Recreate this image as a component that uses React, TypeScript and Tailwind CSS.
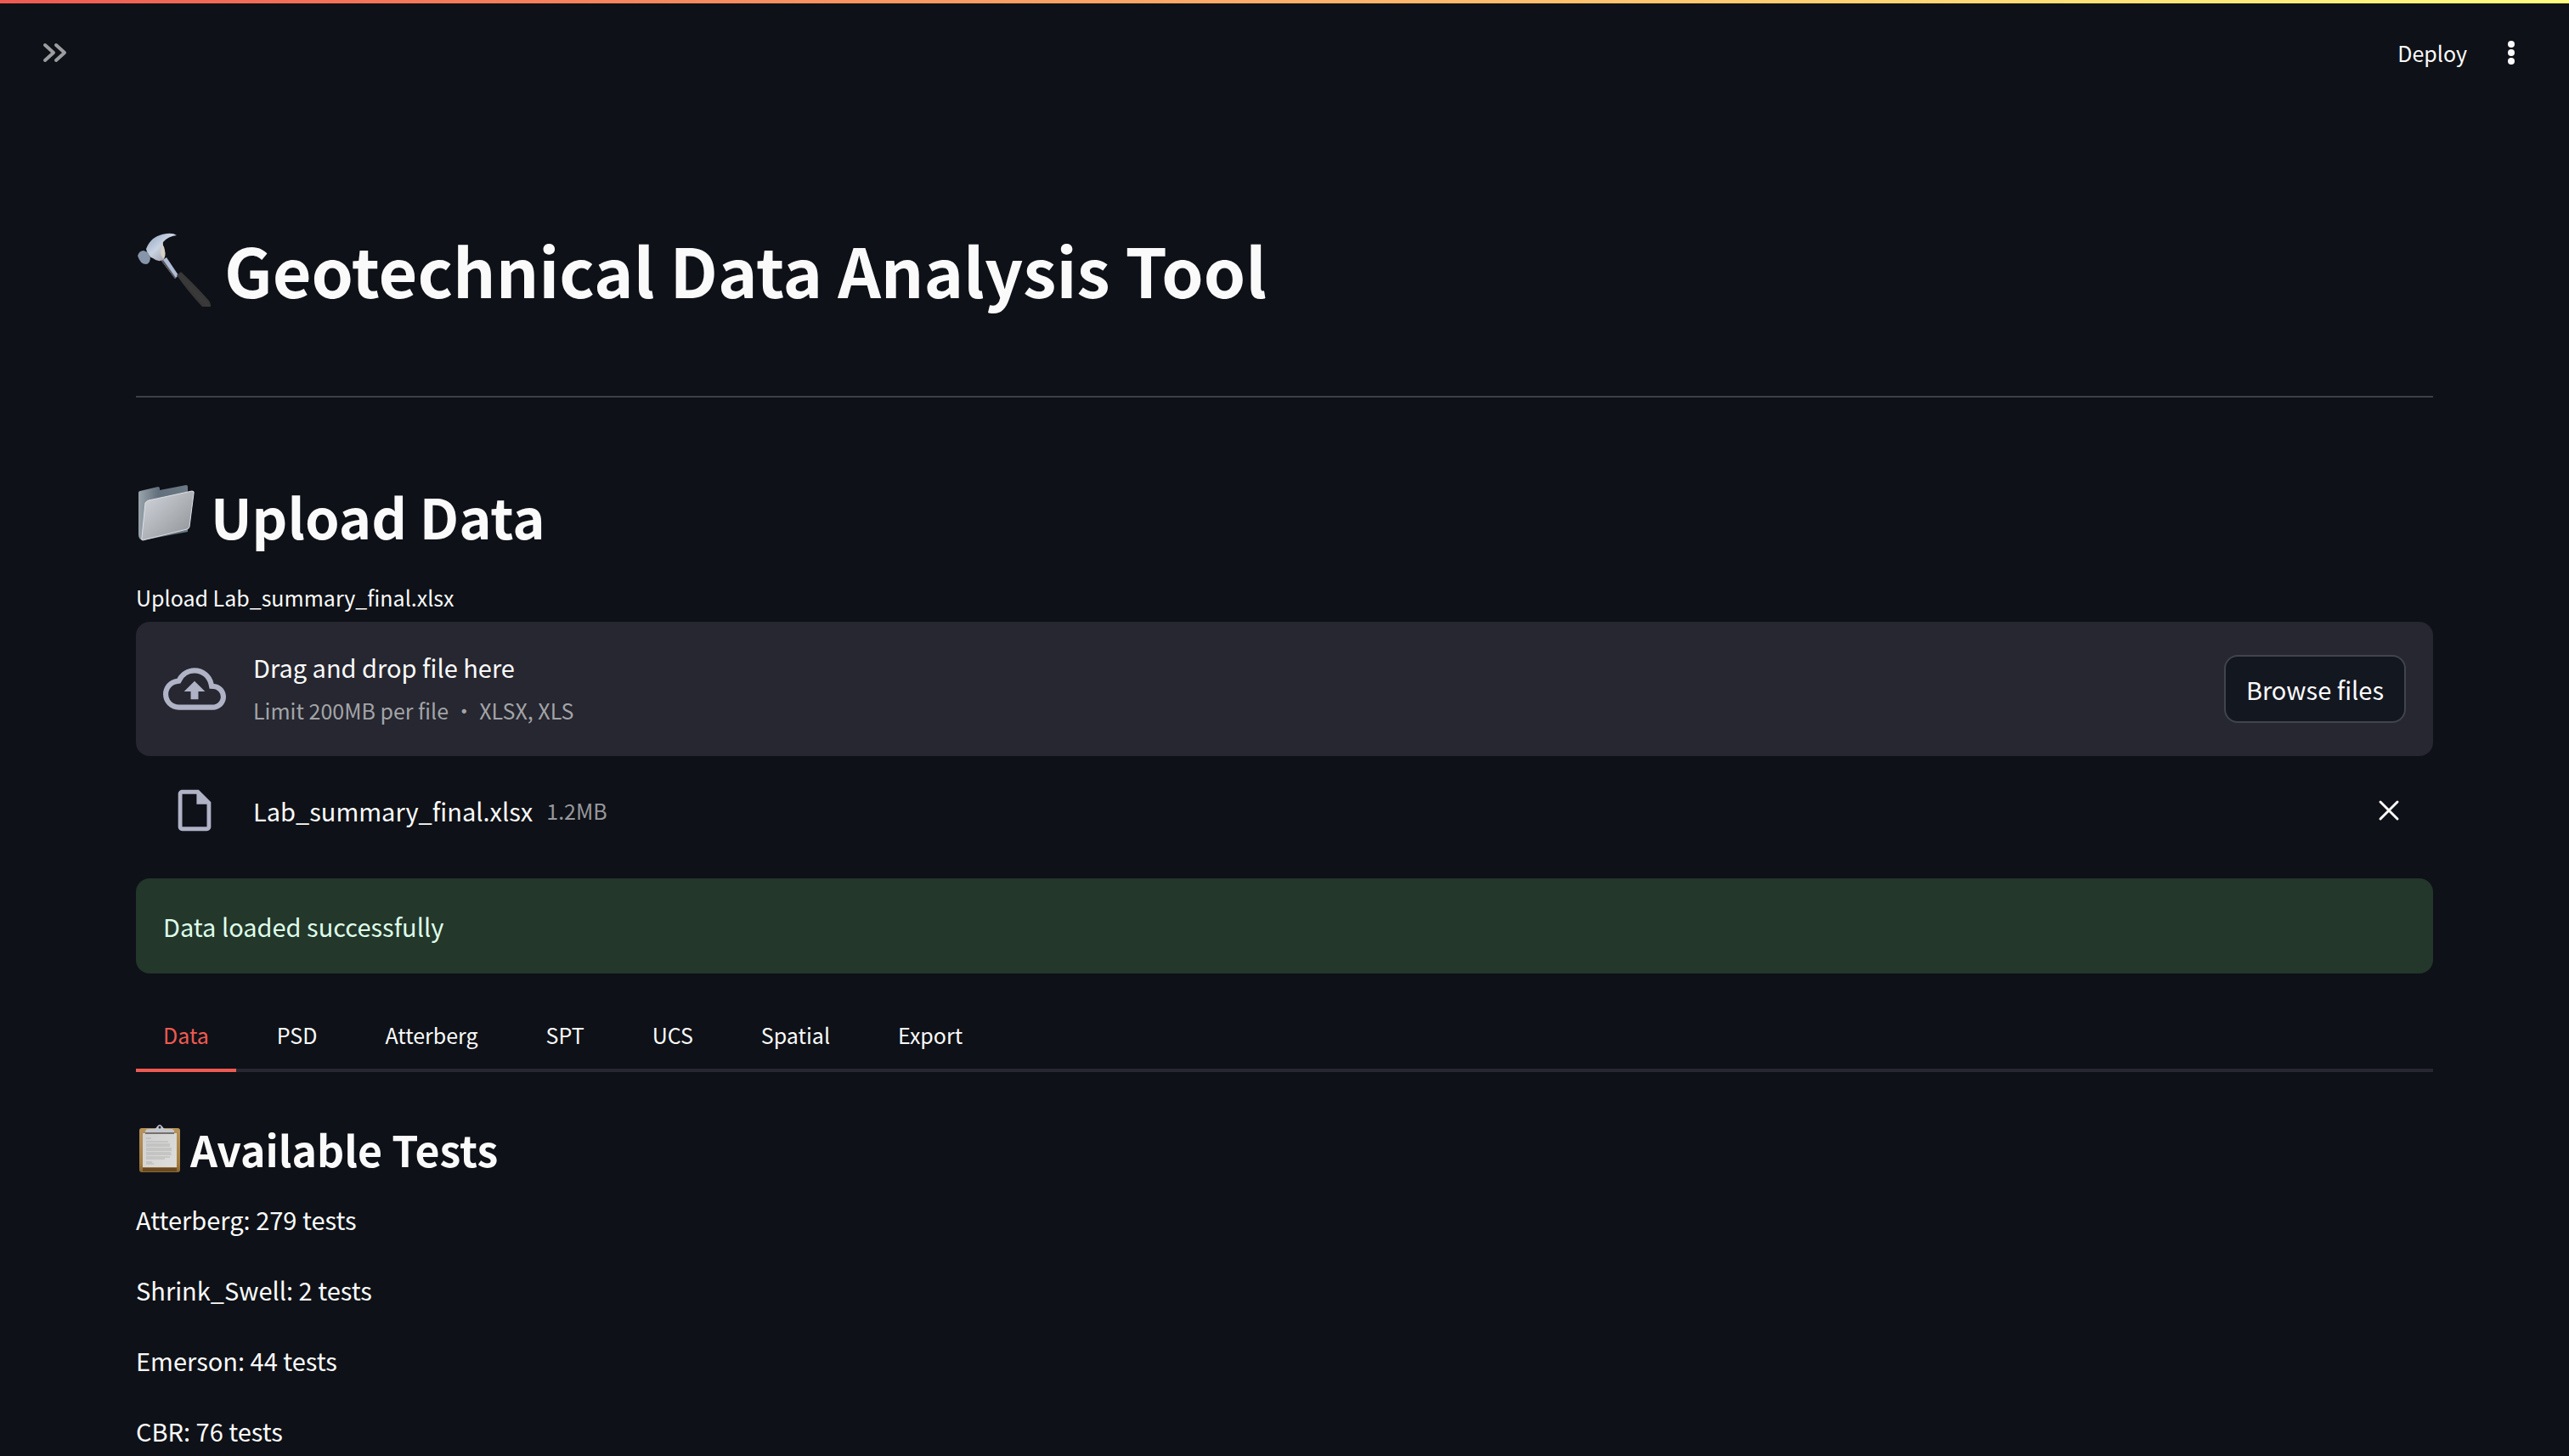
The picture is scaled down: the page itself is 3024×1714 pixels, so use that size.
import React from "react";

const tabs = ["Data", "PSD", "Atterberg", "SPT", "UCS", "Spatial", "Export"];

const tests = [
  { name: "Atterberg", count: 279 },
  { name: "Shrink_Swell", count: 2 },
  { name: "Emerson", count: 44 },
  { name: "CBR", count: 76 },
];

function HammerIcon() {
  return (
    <svg viewBox="0 0 88 88" className="h-[88px] w-[88px] shrink-0" aria-hidden="true">
      <defs>
        <linearGradient id="hammer-head" x1="0" y1="0" x2="1" y2="1">
          <stop offset="0" stopColor="#8fa3bd" />
          <stop offset="0.45" stopColor="#c9d3e2" />
          <stop offset="1" stopColor="#8d8a92" />
        </linearGradient>
        <linearGradient id="hammer-grip" x1="0" y1="1" x2="1" y2="0">
          <stop offset="0" stopColor="#1b1b1b" />
          <stop offset="0.5" stopColor="#3a3a3a" />
          <stop offset="1" stopColor="#222222" />
        </linearGradient>
      </defs>
      <path d="M30 34 L36 30 L50 51 L46 55 Z" fill="#aebdd3" />
      <path d="M30 34 L32 33 L47 54 L46 55 Z" fill="#5b5558" />
      <path d="M46 54 L51 50 Q70 68 84 84 Q88 90 84 94 Q80 96 76 91 Q60 74 46 54 Z" transform="translate(2 -3)" fill="url(#hammer-grip)" />
      <path d="M12 20 Q18 4 36 2 Q44 1 48 4 Q38 5 32 12 Q31 16 34 22 Q36 28 32 33 Q26 36 20 31 Q14 29 12 20 Z" fill="url(#hammer-head)" />
      <path d="M31 14 Q36 21 33 32 Q30 30 29 24 Z" fill="#d8cfc4" />
      <path d="M2 28 Q4 22 9 22 Q16 24 17 31 Q16 38 12 38 Q5 38 2 28 Z" fill="#8795aa" />
    </svg>
  );
}

function FolderIcon() {
  return (
    <svg viewBox="0 0 72 72" className="h-[72px] w-[72px] shrink-0" aria-hidden="true">
      <defs>
        <linearGradient id="folder-front" x1="0" y1="0" x2="1" y2="1">
          <stop offset="0" stopColor="#d3d7de" />
          <stop offset="0.5" stopColor="#b0b3b8" />
          <stop offset="1" stopColor="#8d9193" />
        </linearGradient>
        <linearGradient id="folder-back" x1="0" y1="0" x2="1" y2="0">
          <stop offset="0" stopColor="#9aa4ab" />
          <stop offset="0.4" stopColor="#62707d" />
          <stop offset="1" stopColor="#6b7884" />
        </linearGradient>
      </defs>
      <path d="M3 9 Q3 7 5 7 L26 2 Q28 2 28 4 L28 6 L59 0 Q61 0 61 2 L61 55 L8 65 Q3 64 3 58 Z" fill="url(#folder-back)" />
      <path d="M15 18 L66 7 Q69 7 68 10 L63 49 Q63 51 60 52 L8 65 Q6 65 7 62 L11 21 Q12 19 15 18 Z" fill="url(#folder-front)" stroke="#dde1e6" strokeWidth="1" />
    </svg>
  );
}

function ClipboardIcon() {
  return (
    <svg viewBox="0 0 56 56" className="h-14 w-14 shrink-0" aria-hidden="true">
      <defs>
        <linearGradient id="clip-board" x1="0" y1="0" x2="0" y2="1">
          <stop offset="0" stopColor="#b8935a" />
          <stop offset="0.8" stopColor="#a47c3f" />
          <stop offset="1" stopColor="#8a6633" />
        </linearGradient>
        <linearGradient id="clip-paper" x1="0" y1="0" x2="1" y2="1">
          <stop offset="0" stopColor="#cfcfcf" />
          <stop offset="1" stopColor="#dededc" />
        </linearGradient>
      </defs>
      <rect x="4" y="4" width="48" height="52" rx="3" fill="url(#clip-board)" />
      <rect x="8" y="51" width="40" height="4" fill="#6b4a22" />
      <rect x="8" y="10" width="40" height="40" fill="url(#clip-paper)" />
      <g stroke="#b2b2b2" strokeWidth="1">
        <path d="M12 16h6M12 20h26M12 23h28M12 25h28M12 28h30M12 30h30M12 33h29M12 35h30M12 38h28M12 40h22M12 44h7M12 46h9" />
      </g>
      <path d="M11 10 V8 Q11 5 15 5 H22 Q24 4 25 2 Q28 -2 31 2 Q32 4 34 5 H41 Q45 5 45 8 V10 Z" fill="#c3c8ce" />
      <rect x="11" y="9" width="34" height="2" fill="#77706d" />
      <circle cx="28" cy="3" r="1.5" fill="#22252b" />
    </svg>
  );
}

function CloudUploadIcon() {
  return (
    <svg viewBox="0 0 24 24" className="h-[74px] w-[74px] shrink-0" fill="currentColor" aria-hidden="true">
      <path d="M19.35 10.04A7.49 7.49 0 0012 4C9.11 4 6.6 5.64 5.35 8.04A5.994 5.994 0 000 14c0 3.31 2.69 6 6 6h13c2.76 0 5-2.24 5-5 0-2.64-2.05-4.78-4.65-4.96zM19 18H6c-2.21 0-4-1.79-4-4 0-2.05 1.53-3.76 3.56-3.97l1.07-.11.5-.95A5.469 5.469 0 0112 6c2.62 0 4.88 1.86 5.39 4.43l.3 1.5 1.53.11A2.98 2.98 0 0122 15c0 1.65-1.35 3-3 3zM8 13h2.55v3h2.9v-3H16l-4-4z" />
    </svg>
  );
}

function FileIcon() {
  return (
    <svg viewBox="0 0 24 24" className="h-[58px] w-[58px] shrink-0" fill="currentColor" aria-hidden="true">
      <path d="M14 2H6c-1.1 0-1.99.9-1.99 2L4 20c0 1.1.89 2 1.99 2H18c1.1 0 2-.9 2-2V8l-6-6zM6 20V4h7v5h5v11H6z" />
    </svg>
  );
}

export default function App() {
  const [active, setActive] = React.useState("Data");
  return (
    <div className="flex h-screen flex-col overflow-hidden bg-[#0e1117] font-['Noto_Sans_CJK_SC',sans-serif] text-[29px] leading-[51px] text-[#fafafa]">
      <div className="h-1 shrink-0 bg-linear-to-r from-[#ee5a52] to-[#fffd80]" />
      <header className="flex h-[116px] shrink-0 items-center justify-between pr-12 pl-10">
        <button type="button" aria-label="Open sidebar" className="flex h-12 w-12 items-center justify-center text-[#9c9da0]">
          <svg viewBox="0 0 48 48" className="h-12 w-12" fill="none" stroke="currentColor" strokeWidth="4" strokeLinecap="round" strokeLinejoin="round">
            <path d="M13 15l10 9-10 9M26 15l10 9-10 9" />
          </svg>
        </button>
        <div className="flex items-center gap-8">
          <button type="button" className="text-[25px]">Deploy</button>
          <button type="button" aria-label="Main menu" className="flex h-10 w-10 items-center justify-center">
            <svg viewBox="0 0 40 40" className="h-10 w-10" fill="currentColor">
              <circle cx="20" cy="10" r="4" />
              <circle cx="20" cy="20" r="4" />
              <circle cx="20" cy="30" r="4" />
            </svg>
          </button>
        </div>
      </header>

      <main className="flex flex-col px-40 pt-36">
        <h1 className="flex items-center gap-4 text-[79px] leading-[106px] font-bold">
          <HammerIcon />
          Geotechnical Data Analysis Tool
        </h1>
        <hr className="mt-24 border-t-2 border-[#3d4044]" />

        <h2 className="mt-24 flex items-center gap-4 text-[65px] leading-[86px] font-bold">
          <FolderIcon />
          Upload Data
        </h2>
        <label htmlFor="file" className="mt-8 text-[25px] leading-[42px]">Upload Lab_summary_final.xlsx</label>
        <section className="mt-2 flex h-[158px] items-center gap-8 rounded-2xl bg-[#262730] px-8">
          <span className="text-[#b0b3c6]"><CloudUploadIcon /></span>
          <div className="flex grow flex-col">
            <span>Drag and drop file here</span>
            <small className="text-[25px] text-[#a3a4a8]">Limit 200MB per file • XLSX, XLS</small>
          </div>
          <input id="file" type="file" accept=".xlsx,.xls" className="hidden" />
          <button type="button" className="h-20 rounded-2xl border-2 border-[#41444c] bg-[#131720] px-6">Browse files</button>
        </section>

        <div className="mt-8 flex h-16 items-center pr-8 pl-10">
          <span className="mr-10 text-[#b0b3c6]"><FileIcon /></span>
          <span>Lab_summary_final.xlsx</span>
          <small className="ml-4 text-[25px] text-[#97989c]">1.2MB</small>
          <button type="button" aria-label="Remove file" className="ml-auto flex h-10 w-10 items-center justify-center">
            <svg viewBox="0 0 40 40" className="h-10 w-10" stroke="currentColor" strokeWidth="3" strokeLinecap="round">
              <path d="M10 10l20 20M30 10l-20 20" />
            </svg>
          </button>
        </div>

        <div role="alert" className="mt-12 flex h-28 items-center rounded-2xl bg-[#23372b] px-8 text-[#dffde9]">
          Data loaded successfully
        </div>

        <div role="tablist" className="mt-8 flex gap-4 border-b-4 border-[#262730]">
          {tabs.map((tab) => (
            <button
              key={tab}
              type="button"
              role="tab"
              aria-selected={tab === active}
              onClick={() => setActive(tab)}
              className={
                tab === active
                  ? "-mb-1 h-[84px] border-b-4 border-[#ee5a52] px-8 text-[25px] text-[#ee5a52]"
                  : "h-20 px-8 text-[25px]"
              }
            >
              {tab}
            </button>
          ))}
        </div>

        <h3 className="mt-14 flex items-center gap-2 text-[50px] leading-[68px] font-bold">
          <ClipboardIcon />
          Available Tests
        </h3>
        <div className="mt-6 flex flex-col gap-8">
          {tests.map((test) => (
            <p key={test.name}>
              {test.name}: {test.count} tests
            </p>
          ))}
        </div>
      </main>
    </div>
  );
}
